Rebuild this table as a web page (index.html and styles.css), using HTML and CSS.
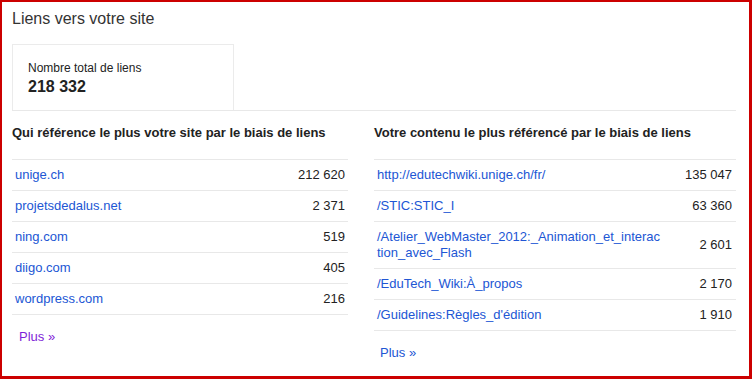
FILE: index.html
```html
<!DOCTYPE html>
<html lang="fr">
<head>
<meta charset="utf-8">
<title>Liens vers votre site</title>
<link rel="stylesheet" href="styles.css">
</head>
<body>
<div class="frame">
  <h1 class="title">Liens vers votre site</h1>
  <div class="summary">
    <div class="card">
      <div class="card-label">Nombre total de liens</div>
      <div class="card-value">218 332</div>
    </div>
  </div>
  <div class="columns">
    <section class="col col-left">
      <h2 class="col-title">Qui référence le plus votre site par le biais de liens</h2>
      <table class="links">
        <tr><td class="name"><a href="#">unige.ch</a></td><td class="num">212 620</td></tr>
        <tr><td class="name"><a href="#">projetsdedalus.net</a></td><td class="num">2 371</td></tr>
        <tr><td class="name"><a href="#">ning.com</a></td><td class="num">519</td></tr>
        <tr><td class="name"><a href="#">diigo.com</a></td><td class="num">405</td></tr>
        <tr><td class="name"><a href="#">wordpress.com</a></td><td class="num">216</td></tr>
      </table>
      <a class="more visited" href="#">Plus »</a>
    </section>
    <section class="col col-right">
      <h2 class="col-title">Votre contenu le plus référencé par le biais de liens</h2>
      <table class="links">
        <tr><td class="name"><a href="#">http://edutechwiki.unige.ch/fr/</a></td><td class="num">135 047</td></tr>
        <tr><td class="name"><a href="#">/STIC:STIC_I</a></td><td class="num">63 360</td></tr>
        <tr><td class="name wrap"><a href="#">/Atelier_WebMaster_2012:_Animation_et_interac<wbr>tion_avec_Flash</a></td><td class="num">2 601</td></tr>
        <tr><td class="name"><a href="#">/EduTech_Wiki:À_propos</a></td><td class="num">2 170</td></tr>
        <tr><td class="name"><a href="#">/Guidelines:Règles_d'édition</a></td><td class="num">1 910</td></tr>
      </table>
      <a class="more" href="#">Plus »</a>
    </section>
  </div>
</div>
</body>
</html>
```

FILE: styles.css
```css
* { box-sizing: border-box; }

html, body {
  margin: 0;
  padding: 0;
  background: #fff;
}

body {
  font-family: Arial, "Liberation Sans", sans-serif;
  color: #222;
}

.frame {
  height: 379px;
  width: 752px;
  border-style: solid;
  border-color: #cc0000;
  border-width: 2px 3px 3px 2px;
  padding: 8px 13px 0 10px;
  overflow: hidden;
}

.title {
  margin: 0;
  font-size: 16px;
  line-height: 18px;
  font-weight: normal;
  color: #333;
}

.summary {
  margin-top: 16px;
  border-bottom: 1px solid #e8e8e8;
  display: flex;
}

.card {
  width: 222px;
  border: 1px solid #ebebeb;
  border-bottom: none;
  padding: 15px 15px 14px 15px;
}

.card-label {
  font-size: 12px;
  line-height: 16px;
  color: #222;
}

.card-value {
  margin-top: 2px;
  font-size: 16px;
  line-height: 18px;
  font-weight: bold;
  color: #222;
}

.columns {
  display: grid;
  grid-template-columns: 1fr 1fr;
}

.col {
  padding-top: 14px;
}

.col-left {
  padding-right: 26px;
}

.col-title {
  margin: 0 0 18px 0;
  font-size: 13px;
  line-height: 16px;
  font-weight: bold;
  color: #222;
}

.links {
  width: 100%;
  border-collapse: collapse;
  font-size: 13px;
  line-height: 16px;
}

.links td {
  border-top: 1px solid #e8e8e8;
  border-bottom: 1px solid #e8e8e8;
  padding: 7px 3px;
  vertical-align: middle;
}

.links .num {
  text-align: right;
  white-space: nowrap;
  color: #222;
  padding-right: 3px;
}

.col-right .links .num {
  padding-right: 4px;
}

.links .wrap a {
  display: inline-block;
  max-width: 300px;
}

a {
  color: #2156d4;
  text-decoration: none;
}

.more {
  display: inline-block;
  margin-top: 14px;
  margin-left: 7px;
  font-size: 13px;
  line-height: 16px;
}

.col-right .more {
  margin-left: 6px;
}

.more.visited {
  color: #7f1fd8;
}
```
